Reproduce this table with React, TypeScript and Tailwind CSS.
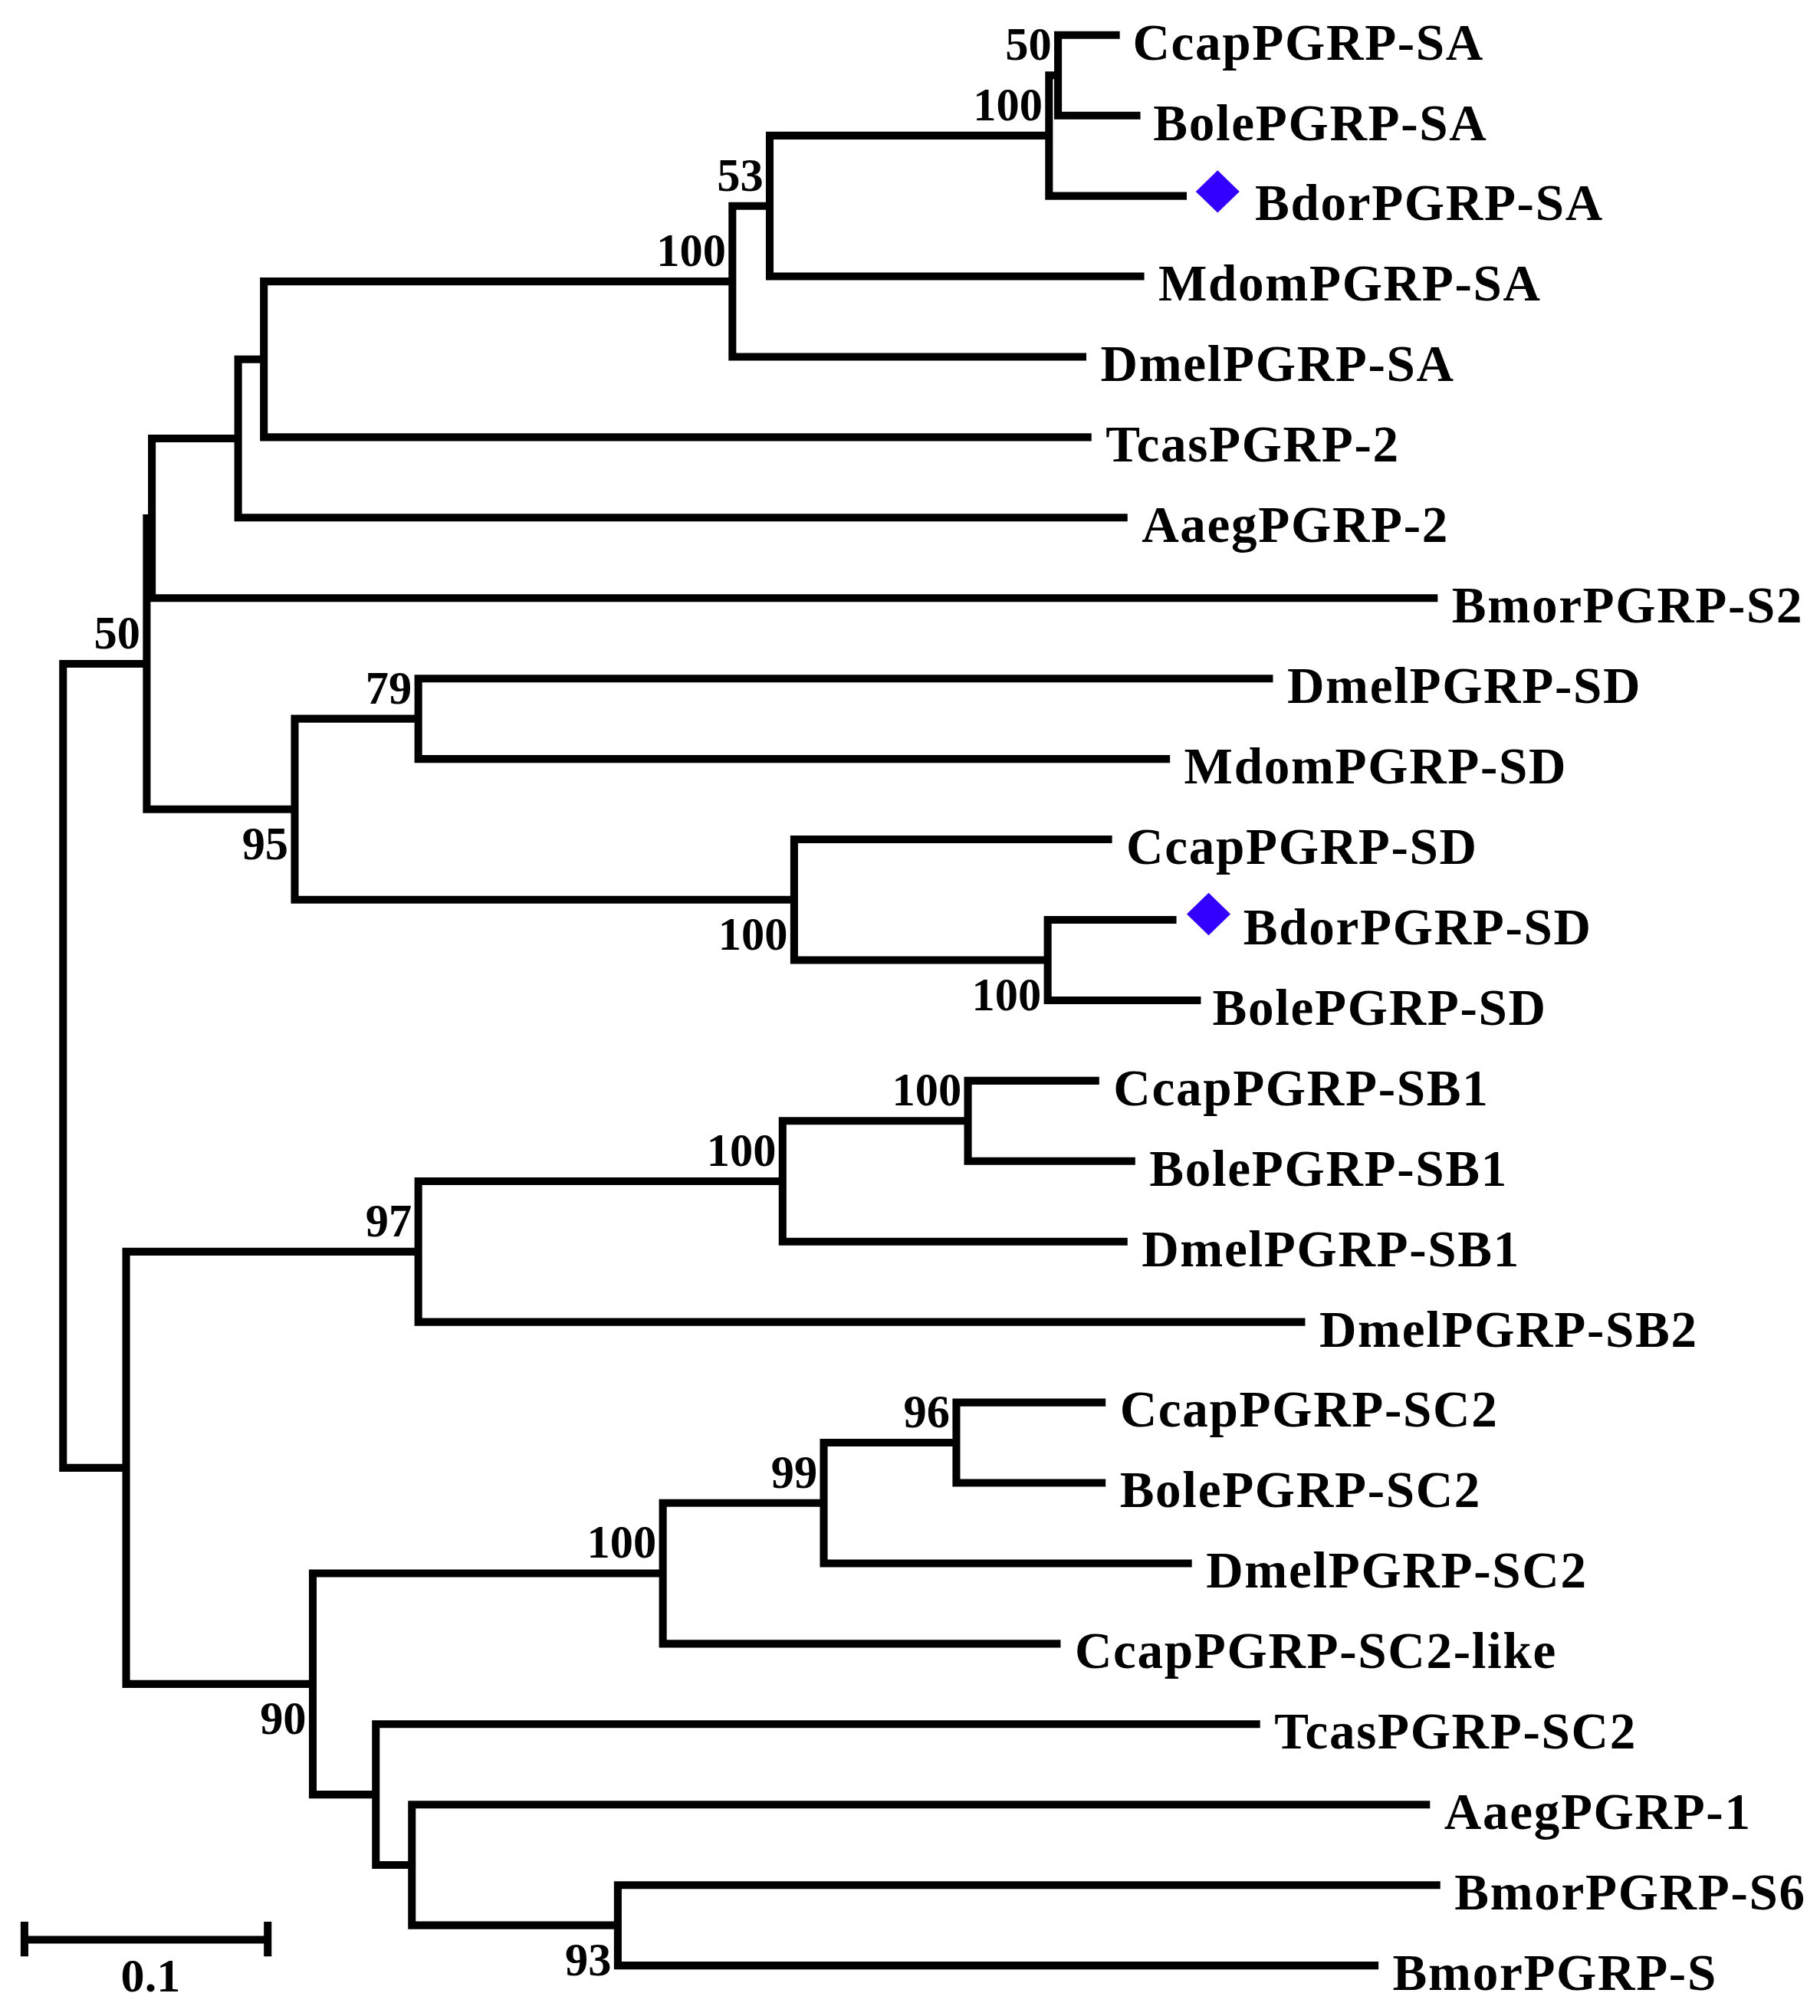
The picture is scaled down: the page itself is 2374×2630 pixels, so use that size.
type Leaf = { name: string; end: number; tx: number; mark?: [number, number] };
type Node = { x: number; bs?: string; below?: boolean; kids: Tree[] };
type Tree = Leaf | Node;

const leaf = (name: string, tx: number, end?: number, mark?: [number, number]): Leaf => ({
  name,
  tx,
  end: end ?? tx - 11,
  mark,
});
const node = (x: number, kids: Tree[], bs?: string, below?: boolean): Node => ({ x, kids, bs, below });

const tree: Node = node(49, [
  node(114, [
    node(118, [
      node(185, [
        node(205, [
          node(569, [
            node(598, [
              node(815, [
                node(822, [leaf("CcapPGRP-SA", 880, 870), leaf("BolePGRP-SA", 896, 886)], "50"),
                leaf("BdorPGRP-SA", 975, 922, [946, 148.6]),
              ], "100"),
              leaf("MdomPGRP-SA", 900, 889),
            ], "53"),
            leaf("DmelPGRP-SA", 855, 844),
          ], "100"),
          leaf("TcasPGRP-2", 859, 848),
        ]),
        leaf("AaegPGRP-2", 887),
      ]),
      leaf("BmorPGRP-S2", 1128),
    ]),
    node(229, [
      node(325, [leaf("DmelPGRP-SD", 1000), leaf("MdomPGRP-SD", 920)], "79"),
      node(617, [
        leaf("CcapPGRP-SD", 875),
        node(814, [leaf("BdorPGRP-SD", 966, 914, [939, 710]), leaf("BolePGRP-SD", 942, 933)], "100", true),
      ], "100", true),
    ], "95", true),
  ], "50"),
  node(98, [
    node(325, [
      node(608, [
        node(752, [leaf("CcapPGRP-SB1", 865), leaf("BolePGRP-SB1", 893)], "100"),
        leaf("DmelPGRP-SB1", 887),
      ], "100"),
      leaf("DmelPGRP-SB2", 1025),
    ], "97"),
    node(243, [
      node(515, [
        node(640, [
          node(743, [leaf("CcapPGRP-SC2", 870), leaf("BolePGRP-SC2", 870)], "96"),
          leaf("DmelPGRP-SC2", 937),
        ], "99"),
        leaf("CcapPGRP-SC2-like", 835),
      ], "100"),
      node(292, [
        leaf("TcasPGRP-SC2", 990),
        node(320, [
          leaf("AaegPGRP-1", 1122),
          node(480, [leaf("BmorPGRP-S6", 1130), leaf("BmorPGRP-S", 1082)], "93", true),
        ]),
      ]),
    ], "90", true),
  ]),
]);

type Drawn = { y: number; x: number; paths: string[]; texts: React.ReactNode[] };

const FONT = "'Liberation Serif', 'Times New Roman', serif";

function layout(t: Tree, counter: { i: number }): Drawn {
  if (!("kids" in t)) {
    const y = 27 + 62.5 * counter.i++;
    const texts: React.ReactNode[] = [
      <text key={t.name} x={t.tx} y={y + 19} fontSize={40} fontWeight={700} letterSpacing={1} fontFamily={FONT}>
        {t.name}
      </text>,
    ];
    if (t.mark) {
      const [cx, cy] = t.mark;
      texts.push(
        <polygon
          key={t.name + "-mark"}
          points={`${cx},${cy - 16.5} ${cx + 17},${cy} ${cx},${cy + 16.5} ${cx - 17},${cy}`}
          fill="#3300ff"
        />
      );
    }
    return { y, x: t.end, paths: [], texts };
  }
  const kids = t.kids.map((k) => layout(k, counter));
  const a = kids[0];
  const b = kids[kids.length - 1];
  const y = (a.y + b.y) / 2;
  const paths = kids.flatMap((k) => k.paths);
  const texts = kids.flatMap((k) => k.texts);
  paths.push(`M${a.x} ${a.y}H${t.x}V${b.y}H${b.x}`);
  if (t.bs) {
    texts.push(
      <text
        key={`bs-${t.x}-${y}`}
        x={t.x - 5}
        y={t.below ? y + 39 : y - 12}
        textAnchor="end"
        fontSize={36}
        fontWeight={700}
        fontFamily={FONT}
      >
        {t.bs}
      </text>
    );
  }
  return { y, x: t.x, paths, texts };
}

export default function App() {
  const d = layout(tree, { i: 0 });
  return (
    <div className="w-[2374px] h-[2630px] bg-white">
      <svg viewBox="0 0 1414 1566" className="block w-[2374px] h-[2630px]">
        <g fill="none" stroke="#000" strokeWidth={6} strokeLinejoin="miter" strokeLinecap="butt">
          {d.paths.map((p, i) => (
            <path key={i} d={p} />
          ))}
          <path d="M19 1507H208M19 1493V1520M208 1493V1520" />
        </g>
        <g fill="#000">{d.texts}</g>
        <text x={117} y={1547} textAnchor="middle" fontSize={37} fontWeight={700} fontFamily={FONT}>
          0.1
        </text>
      </svg>
    </div>
  );
}
